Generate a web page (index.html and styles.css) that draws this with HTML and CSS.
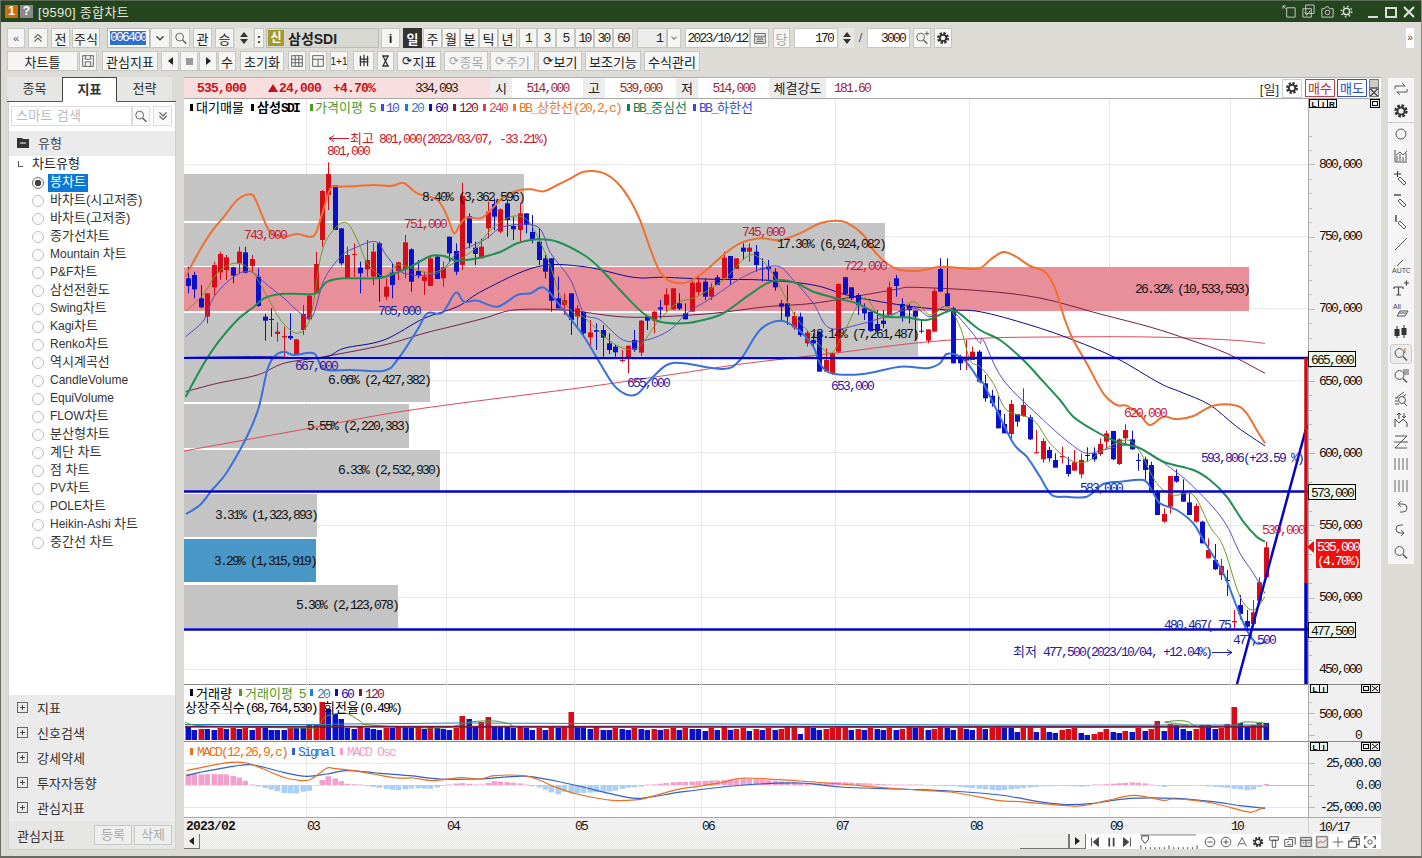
FILE: index.html
```html
<!DOCTYPE html>
<html lang="ko">
<head>
<meta charset="utf-8">
<title>[9590] 종합차트</title>
<link rel="stylesheet" href="styles.css">
</head>
<body>
<svg class="defs" width="0" height="0">
  <symbol id="gear" viewBox="0 0 18 18">
    <circle cx="9" cy="9" r="5.4" fill="none" stroke="#333" stroke-width="2.6" stroke-dasharray="2.6 1.6"/>
    <circle cx="9" cy="9" r="3.6" fill="none" stroke="#333" stroke-width="2"/>
  </symbol>
  <symbol id="mag" viewBox="0 0 18 18">
    <circle cx="7.5" cy="8" r="4.4" fill="none" stroke="#555"/><path d="M11 11.5l4 4" stroke="#555" stroke-width="1.4"/>
  </symbol>
  <symbol id="pencil" viewBox="0 0 18 18">
    <path d="M8 8l6 6-2 2-6-6z" fill="none" stroke="#555"/>
  </symbol>
  <symbol id="bars" viewBox="0 0 18 18">
    <path d="M3 3v12M7 3v12M11 3v12M15 3v12" stroke="#666" fill="none"/>
  </symbol>
  <symbol id="chev" viewBox="0 0 18 18">
    <path d="M5 7l4 4 4-4" stroke="#444" stroke-width="1.5" fill="none"/>
  </symbol>
  <symbol id="chev2" viewBox="0 0 18 18">
    <path d="M5 9l4-4 4 4M5 13l4-4 4 4" stroke="#555" stroke-width="1.2" fill="none"/>
  </symbol>
  <symbol id="chev3" viewBox="0 0 18 18">
    <path d="M5 5l4 4 4-4M5 9l4 4 4-4" stroke="#555" stroke-width="1.2" fill="none"/>
  </symbol>
</svg>

<div class="window">
  <div class="titlebar">
    <span class="tbadge orange">1</span><span class="tbadge grey">?</span>
    <span class="ttext">[9590] 종합차트</span>
    <span class="ticons">
      <svg class="ti" viewBox="0 0 16 16"><path d="M1 2l3 3M1 2h3M1 2v3M5 4h9v10H5z" fill="none" stroke="#ccc"/></svg>
      <svg class="ti" viewBox="0 0 16 16"><path d="M5 1h9v9H5zM2 5h9v9H2zM4 9l2 3 4-5" fill="none" stroke="#ccc"/></svg>
      <svg class="ti" viewBox="0 0 16 16"><path d="M2 5h3l1-2h3l1 2h4v9H2z" fill="none" stroke="#ccc"/><circle cx="8" cy="9" r="2.4" fill="none" stroke="#ccc"/></svg>
      <svg class="ti" viewBox="0 0 16 16"><circle cx="8" cy="8" r="3.4" fill="none" stroke="#ddd" stroke-width="1.5"/><circle cx="8" cy="8" r="5.6" fill="none" stroke="#ddd" stroke-width="1.6" stroke-dasharray="1.6 2.8"/></svg>
      <svg class="wb first" viewBox="0 0 14 14"><path d="M2 12h10" stroke="#ddd" stroke-width="2"/></svg>
      <svg class="wb" viewBox="0 0 14 14"><path d="M2 3h10v9H2z" fill="none" stroke="#ddd" stroke-width="2"/></svg>
      <svg class="wb" viewBox="0 0 14 14"><path d="M2 2l10 10M12 2L2 12" stroke="#ddd" stroke-width="2.2"/></svg>
    </span>
  </div>

  <div class="toolbars">
    <div class="tb">
      <span class="b w18 small">«</span>
      <span class="b w20 m3"><svg class="ic" viewBox="0 0 18 18"><use href="#chev2"/></svg></span>
      <span class="b w19 m3">전</span>
      <span class="b w28 m2">주식</span>
      <span class="inp w43 m7"><span class="sel">006400</span></span>
      <span class="b w20"><svg class="ic" viewBox="0 0 18 18"><use href="#chev"/></svg></span>
      <span class="b w19 m1"><svg class="ic" viewBox="0 0 18 18"><use href="#mag"/></svg></span>
      <span class="b w19 m3">관</span>
      <span class="b w19 m3">승</span>
      <span class="spin w18 m1"><i class="up"></i><i class="dn"></i></span>
      <span class="b w10 m1 bold">:</span>
      <span class="namebox w113 m2"><span class="sin">신</span><span class="nm">삼성SDI</span></span>
      <span class="b w19 m2 bold">i</span>
      <span class="b w19 m3 dark">일</span>
      <span class="b w19 m1">주</span>
      <span class="b w18">월</span>
      <span class="b w19">분</span>
      <span class="b w19">틱</span>
      <span class="b w19">년</span>
      <span class="b w18 m2 n">1</span>
      <span class="b w19 n">3</span>
      <span class="b w19 n">5</span>
      <span class="b w19 n">10</span>
      <span class="b w19 n">30</span>
      <span class="b w20 n">60</span>
      <span class="b w30 m4 grey-b right n">1</span>
      <span class="b w14"><svg class="ic" viewBox="0 0 18 18"><use href="#chev"/></svg></span>
      <span class="b w65 m4 white n">2023/10/12</span>
      <span class="b w19"><svg class="ic" viewBox="0 0 18 18"><path d="M3 4h12v11H3zM3 7h12M5 9h8M5 11h8M5 13h8" fill="none" stroke="#555"/></svg></span>
      <span class="b w17 m4 disabled">당</span>
      <span class="b w44 m4 white right n">170</span>
      <span class="spin w15 m1"><i class="up"></i><i class="dn"></i></span>
      <span class="slash">/</span>
      <span class="b w43 white right n">3000</span>
      <span class="b w18 m3"><svg class="ic" viewBox="0 0 18 18"><use href="#mag"/><path d="M12 4h5M14.500 1.500v5" stroke="#555"/></svg></span>
      <span class="b w18 m3"><svg class="ic" viewBox="0 0 18 18"><use href="#gear"/></svg></span>
      <span class="fold">»</span>
    </div>
    <div class="tb">
      <span class="b w71">차트틀</span>
      <span class="b w18 m1"><svg class="ic" viewBox="0 0 18 18"><path d="M3 3h12v12H3zM6 3v4h6V3M6 15v-5h6v5" fill="none" stroke="#555"/></svg></span>
      <span class="b w56 m5">관심지표</span>
      <span class="b w18 m3"><i class="tri-l"></i></span>
      <span class="b w18 m1"><i class="sq"></i></span>
      <span class="b w18 m1"><i class="tri-r"></i></span>
      <span class="b w18 m1">수</span>
      <span class="b w44 m4">초기화</span>
      <span class="b w18 m4"><svg class="ic" viewBox="0 0 18 18"><path d="M3 3h12v12H3zM3 7h12M3 11h12M7 3v12M11 3v12" fill="none" stroke="#555"/></svg></span>
      <span class="b w18 m3"><svg class="ic" viewBox="0 0 18 18"><path d="M3 3h12v12H3zM3 7h12M9 7v8" fill="none" stroke="#555"/></svg></span>
      <span class="b w18 m3 tiny">1+1</span>
      <span class="b w21 m5"><svg class="ic" viewBox="0 0 18 18"><path d="M5 3v12M9 2v13M13 3v12M4 7h10M4 10h10" fill="none" stroke="#333" stroke-width="1.4"/></svg></span>
      <span class="b w17 m3"><svg class="ic" viewBox="0 0 18 18"><path d="M5 3h8M5 15h8M6 3l6 12M12 3L6 15" fill="none" stroke="#333" stroke-width="1.6"/></svg></span>
      <span class="b w44 m3"><span class="rot">⟳</span>지표</span>
      <span class="b w44 m3 disabled"><span class="rot">⟳</span>종목</span>
      <span class="b w45 m2 disabled"><span class="rot">⟳</span>주기</span>
      <span class="b w44 m3"><span class="rot">⟳</span>보기</span>
      <span class="b w56 m3">보조기능</span>
      <span class="b w56 m3">수식관리</span>
    </div>
  </div>

  <div class="main">
    <aside class="side">
      <div class="tabs">
        <span class="tab">종목</span><span class="tab on">지표</span><span class="tab">전략</span>
      </div>
      <div class="panel">
        <div class="searchrow">
          <span class="search">스마트 검색</span>
          <span class="sbtn"><svg class="ic" viewBox="0 0 18 18"><use href="#mag"/></svg></span>
          <span class="sbtn second"><svg class="ic" viewBox="0 0 18 18"><use href="#chev3"/></svg></span>
        </div>
        <div class="head">
          <svg class="folder" viewBox="0 0 12 10"><path d="M0 0h5l1 1h6v9H0z" fill="#333"/><path d="M3 5h6" stroke="#fff"/></svg>
          <span class="headt">유형</span>
        </div>
        <div class="tree">
          <div class="root"><i class="corner"></i>차트유형</div>
          <div class="row"><i class="radio on"></i><span class="hl">봉차트</span></div>
          <div class="row"><i class="radio"></i><span>바차트(시고저종)</span></div>
          <div class="row"><i class="radio"></i><span>바차트(고저종)</span></div>
          <div class="row"><i class="radio"></i><span>종가선차트</span></div>
          <div class="row"><i class="radio"></i><span><em class="l">Mountain </em>차트</span></div>
          <div class="row"><i class="radio"></i><span><em class="l">P&amp;F</em>차트</span></div>
          <div class="row"><i class="radio"></i><span>삼선전환도</span></div>
          <div class="row"><i class="radio"></i><span><em class="l">Swing</em>차트</span></div>
          <div class="row"><i class="radio"></i><span><em class="l">Kagi</em>차트</span></div>
          <div class="row"><i class="radio"></i><span><em class="l">Renko</em>차트</span></div>
          <div class="row"><i class="radio"></i><span>역시계곡선</span></div>
          <div class="row"><i class="radio"></i><span><em class="l">CandleVolume</em></span></div>
          <div class="row"><i class="radio"></i><span><em class="l">EquiVolume</em></span></div>
          <div class="row"><i class="radio"></i><span><em class="l">FLOW</em>차트</span></div>
          <div class="row"><i class="radio"></i><span>분산형차트</span></div>
          <div class="row"><i class="radio"></i><span>계단 차트</span></div>
          <div class="row"><i class="radio"></i><span>점 차트</span></div>
          <div class="row"><i class="radio"></i><span><em class="l">PV</em>차트</span></div>
          <div class="row"><i class="radio"></i><span><em class="l">POLE</em>차트</span></div>
          <div class="row"><i class="radio"></i><span><em class="l">Heikin-Ashi </em>차트</span></div>
          <div class="row"><i class="radio"></i><span>중간선 차트</span></div>
        </div>
        <div class="accordion">
          <div class="acc"><i class="plus"></i>지표</div>
          <div class="acc"><i class="plus"></i>신호검색</div>
          <div class="acc"><i class="plus"></i>강세약세</div>
          <div class="acc"><i class="plus"></i>투자자동향</div>
          <div class="acc"><i class="plus"></i>관심지표</div>
        </div>
        <div class="sidefoot">
          <span class="ftitle">관심지표</span>
          <span class="fbtn">등록</span><span class="fbtn">삭제</span>
        </div>
      </div>
    </aside>

    <section class="chartcol">
      <div class="quote">
        <div class="q-pink">
          <span class="q1">535,000</span><span class="q2"><i class="uptri"></i>24,000</span><span class="q3">+4.70%</span><span class="q4">334,093</span>
        </div>
        <span class="ql w22">시</span><span class="qv">514,000</span>
        <span class="ql w22">고</span><span class="qv">539,000</span>
        <span class="ql w22">저</span><span class="qv">514,000</span>
        <span class="ql w57">체결강도</span><span class="qs">181.60</span>
        <span class="qday">[일]</span>
        <span class="qgear"><svg class="ic" viewBox="0 0 18 18"><use href="#gear"/></svg></span>
        <span class="qbuy">매수</span><span class="qsell">매도</span>
        <span class="qmini"><i></i><i class="x"></i></span>
      </div>

      <svg id="price" class="pane" width="1197" height="585" viewBox="184 99 1197 585">
        <rect x="184" y="99" width="1124" height="585" fill="#fff"/>
        <g id="grid"></g>
        <g class="profile">
          <rect x="184" y="174" width="340" height="47"/>
          <rect x="184" y="223" width="701" height="43"/>
          <rect x="184" y="267" width="1065" height="44" class="poc"/>
          <rect x="184" y="313" width="734" height="43"/>
          <rect x="184" y="360" width="246" height="42"/>
          <rect x="184" y="404" width="225" height="44"/>
          <rect x="184" y="450" width="256" height="42"/>
          <rect x="184" y="494" width="133" height="43"/>
          <rect x="184" y="539" width="132" height="43" class="cur"/>
          <rect x="184" y="585" width="214" height="43"/>
        </g>
        <g id="lines-back"></g>
        <g id="candles"></g>
        <g id="lines-front"></g>
        <g class="hlines">
          <path d="M184 358h1124M184 491.500h1124M184 629.500h1124"/>
          <path d="M1237 684L1307 425"/>
        </g>
        <path d="M1306 358v225" stroke="#d00a14" stroke-width="3.500"/>
        <path d="M1306 583v101" stroke="#0000c4" stroke-width="3.500"/>

        <g class="legend">
          <rect x="190" y="104" width="3" height="7" fill="#000"/><text x="196" y="112"><tspan class="h">대기매물</tspan></text>
          <rect x="251" y="104" width="3" height="7" fill="#000"/><text x="257" y="112" class="bd"><tspan class="h">삼성</tspan>SDI</text>
          <rect x="310" y="104" width="3" height="7" fill="#4f9a25"/><text x="315" y="112" fill="#4f9a25"><tspan class="h">가격이평</tspan> 5</text>
          <rect x="381" y="104" width="3" height="7" fill="#4848e0"/><text x="386" y="112" fill="#4848e0">10</text>
          <rect x="405" y="104" width="3" height="7" fill="#1c84c4"/><text x="411" y="112" fill="#1c84c4">20</text>
          <rect x="429" y="104" width="3" height="7" fill="#1010a8"/><text x="435" y="112" fill="#1010a8">60</text>
          <rect x="453" y="104" width="3" height="7" fill="#702040"/><text x="459" y="112" fill="#702040">120</text>
          <rect x="483" y="104" width="3" height="7" fill="#e04050"/><text x="489" y="112" fill="#e04050">240</text>
          <rect x="513" y="104" width="3" height="7" fill="#e87830"/><text x="519" y="112" fill="#e87830">BB_<tspan class="h">상한선</tspan>(20,2,c)</text>
          <rect x="627" y="104" width="3" height="7" fill="#108050"/><text x="633" y="112" fill="#108050">BB_<tspan class="h">중심선</tspan></text>
          <rect x="693" y="104" width="3" height="7" fill="#3050d0"/><text x="699" y="112" fill="#3050d0">BB_<tspan class="h">하한선</tspan></text>
        </g>

        <g class="plabel" text-anchor="end">
          <text x="524" y="201">8.40% (3,362,596)</text>
          <text x="885" y="248">17.30% (6,924,082)</text>
          <text x="1249" y="293">26.32% (10,533,593)</text>
          <text x="918" y="338">18.14% (7,261,487)</text>
          <text x="430" y="384">6.06% (2,427,382)</text>
          <text x="409" y="430">5.55% (2,220,383)</text>
          <text x="440" y="474">6.33% (2,532,930)</text>
          <text x="317" y="519">3.31% (1,323,893)</text>
          <text x="316" y="565">3.29% (1,315,919)</text>
          <text x="398" y="609">5.30% (2,123,078)</text>
        </g>
        <path d="M329 138.500h20M329 138.500l5-3M329 138.500l5 3" stroke="#c8182c" fill="none"/>
        <path d="M1212 652.500h20M1232 652.500l-5-3M1232 652.500l-5 3" stroke="#1c20a0" fill="none"/>
        <g class="redl">
          <text x="350" y="143"><tspan class="h">최고</tspan></text>
          <text x="379" y="143">801,000(2023/03/07, -33.21%)</text>
          <text x="327" y="155">801,000</text>
          <text x="244" y="239">743,000</text>
          <text x="404" y="228">751,000</text>
          <text x="742" y="236">745,000</text>
          <text x="844" y="270">722,000</text>
          <text x="1124" y="417">620,000</text>
          <text x="1262" y="534">539,000</text>
        </g>
        <g class="bluel">
          <text x="378" y="315">705,000</text>
          <text x="295" y="370">667,000</text>
          <text x="627" y="387">655,000</text>
          <text x="831" y="390">653,000</text>
          <text x="1080" y="492">583,000</text>
          <text x="1233" y="644">477,500</text>
          <text x="1201" y="462">593,806(+23.59 %)</text>
          <text x="1164" y="629">480,467( 75</text>
          <text x="1013" y="656"><tspan class="h">최저</tspan></text>
          <text x="1043" y="656">477,500(2023/10/04, +12.04%)</text>
        </g>

        <rect x="1308" y="99" width="73" height="585" fill="#f0f0f0"/>
        <path d="M1308.500 99v585" stroke="#aaa"/>
        <path id="pticks" stroke="#bbb" fill="none"/>
        <g class="lir">
          <rect x="1309.500" y="99.500" width="9" height="8"/><rect x="1318.500" y="99.500" width="9" height="8"/><rect x="1327.500" y="99.500" width="9" height="8"/>
          <text x="1314" y="106.500">L</text><text x="1323" y="106.500">I</text><text x="1332" y="106.500">R</text>
          <rect x="1370.500" y="99.500" width="9" height="8"/><rect x="1372.500" y="101.500" width="5" height="4"/>
        </g>
        <g class="axis" text-anchor="end">
          <text x="1361" y="168">800,000</text>
          <text x="1361" y="240">750,000</text>
          <text x="1361" y="312">700,000</text>
          <text x="1361" y="385">650,000</text>
          <text x="1361" y="457">600,000</text>
          <text x="1361" y="529">550,000</text>
          <text x="1361" y="601">500,000</text>
          <text x="1361" y="673">450,000</text>
        </g>
        <g class="badge">
          <rect x="1308.500" y="351.500" width="47" height="15"/><text x="1332" y="363.500">665,000</text>
          <rect x="1308.500" y="484.500" width="47" height="15"/><text x="1332" y="496.500">573,000</text>
          <rect x="1308.500" y="622.500" width="47" height="15"/><text x="1332" y="634.500">477,500</text>
        </g>
        <path d="M1307 547l7-6v12z" fill="#ee1010"/>
        <rect x="1316" y="539" width="44" height="29" fill="#ee1010"/>
        <g class="lastp"><text x="1338" y="551">535,000</text><text x="1338" y="565">(4.70%)</text></g>
      </svg>

      <svg id="volume" class="pane lined" width="1197" height="57" viewBox="184 685 1197 57">
        <rect x="184" y="685" width="1124" height="57" fill="#fff"/>
        <path d="M184 684.500h1197" stroke="#8a8a8a" transform="translate(0,1)"/>
        <g id="vgrid"></g>
        <g id="vbars"></g>
        <g id="vlines"></g>
        <g class="legend">
          <rect x="190" y="690" width="3" height="7" fill="#000"/><text x="196" y="699"><tspan class="h">거래량</tspan></text>
          <rect x="239" y="690" width="3" height="7" fill="#4f9a25"/><text x="245" y="699" fill="#4f9a25"><tspan class="h">거래이평</tspan> 5</text>
          <rect x="310" y="690" width="3" height="7" fill="#1c84c4"/><text x="317" y="699" fill="#1c84c4">20</text>
          <rect x="335" y="690" width="3" height="7" fill="#1010a8"/><text x="341" y="699" fill="#1010a8">60</text>
          <rect x="359" y="690" width="3" height="7" fill="#702040"/><text x="365" y="699" fill="#702040">120</text>
          <text x="185" y="713"><tspan class="h">상장주식수</tspan>(68,764,530)</text><text x="323" y="713"><tspan class="h">회전율</tspan>(0.49%)</text>
        </g>
        <rect x="1308" y="686" width="73" height="56" fill="#f0f0f0"/>
        <path d="M1308.500 685v57" stroke="#aaa"/>
        <path id="vticks" stroke="#bbb" fill="none"/>
        <g class="lir">
          <rect x="1310.500" y="685.500" width="9" height="8"/><rect x="1319.500" y="685.500" width="8" height="8"/>
          <text x="1315" y="692.500">L</text><text x="1323.500" y="692.500">I</text>
          <rect x="1361.500" y="685.500" width="9" height="8"/><rect x="1370.500" y="685.500" width="9" height="8"/>
          <rect x="1363.500" y="687.500" width="5" height="4"/><path d="M1372 687l6 5M1378 687l-6 5" fill="none" stroke="#000"/>
        </g>
        <g class="axis" text-anchor="end">
          <text x="1361" y="719">500,000</text>
          <text x="1361" y="740">0</text>
        </g>
      </svg>

      <svg id="macd" class="pane lined" width="1197" height="76" viewBox="184 742 1197 76">
        <rect x="184" y="742" width="1124" height="76" fill="#fff"/>
        <path d="M184 742.500h1197" stroke="#8a8a8a"/>
        <g id="mgrid"></g>
        <g id="mbars"></g>
        <g id="mlines"></g>
        <g class="legend">
          <rect x="190" y="749" width="3" height="7" fill="#e87020"/><text x="197" y="757" fill="#e87020">MACD(12,26,9,c)</text>
          <rect x="292" y="749" width="3" height="7" fill="#3060c8"/><text x="298" y="757" fill="#3060c8">Signal</text>
          <rect x="340" y="749" width="3" height="7" fill="#f4a0cc"/><text x="347" y="757" fill="#f4a0cc">MACD Osc</text>
        </g>
        <rect x="1308" y="743" width="73" height="75" fill="#f0f0f0"/>
        <path d="M1308.500 743v75" stroke="#aaa"/>
        <path id="mticks" stroke="#bbb" fill="none"/>
        <g class="lir">
          <rect x="1310.500" y="743.500" width="9" height="8"/><rect x="1319.500" y="743.500" width="8" height="8"/>
          <text x="1315" y="750.500">L</text><text x="1323.500" y="750.500">I</text>
          <rect x="1361.500" y="743.500" width="9" height="8"/><rect x="1370.500" y="743.500" width="9" height="8"/>
          <rect x="1363.500" y="745.500" width="5" height="4"/><path d="M1372 745l6 5M1378 745l-6 5" fill="none" stroke="#000"/>
        </g>
        <g class="axis" text-anchor="end">
          <text x="1380" y="768">25,000.00</text>
          <text x="1380" y="790">0.00</text>
          <text x="1380" y="812">-25,000.00</text>
        </g>
      </svg>

      <svg id="xaxis" class="pane lined" width="1197" height="17" viewBox="184 818 1197 17">
        <rect x="184" y="818" width="1197" height="17" fill="#f0f0f0"/>
        <path d="M184 818.500h1197" stroke="#aaa"/>
        <path d="M1308.500 819v16" stroke="#ccc"/>
        <g class="xl">
          <text x="186" y="831" class="xbold">2023/02</text>
          <text x="307" y="831">03</text>
          <text x="447" y="831">04</text>
          <text x="575" y="831">05</text>
          <text x="702" y="831">06</text>
          <text x="836" y="831">07</text>
          <text x="970" y="831">08</text>
          <text x="1110" y="831">09</text>
          <text x="1231" y="831">10</text>
          <text x="1319" y="832">10/17</text>
        </g>
      </svg>

      <div class="scroll">
        <span class="arrow"><i class="tri-l"></i></span>
        <span class="track"></span>
        <span class="thumb"></span>
        <span class="arrow wide"><i class="tri-r"></i></span>
        <div class="ctrls">
          <svg class="c" viewBox="0 0 16 16"><path d="M4 3v10M12 3L6 8l6 5z" fill="#444" stroke="#444"/></svg>
          <svg class="c" viewBox="0 0 16 16"><path d="M5 3h2v10H5zM10 3h2v10h-2z" fill="#444"/></svg>
          <svg class="c" viewBox="0 0 16 16"><path d="M12 3v10M4 3l6 5-6 5z" fill="#444" stroke="#444"/></svg>
          <svg class="slider" viewBox="0 0 62 16"><path d="M0 1h60" stroke="#777"/><path d="M2 2h7v4l-3.500 4-3.500-4z" fill="#fff" stroke="#333"/><path d="M1 16v-4M6 16v-2M11 16v-2M16 16v-2M21 16v-2M26 16v-2M31 16v-4M36 16v-2M41 16v-2M46 16v-2M51 16v-2M56 16v-2M61 16v-4" stroke="#444"/></svg>
          <svg class="c" viewBox="0 0 16 16"><circle cx="8" cy="8" r="5.500" fill="none" stroke="#444"/><path d="M5 8h6" stroke="#444"/></svg>
          <svg class="c" viewBox="0 0 16 16"><circle cx="8" cy="8" r="5.500" fill="none" stroke="#444"/><path d="M5 8h6M8 5v6" stroke="#444"/></svg>
          <svg class="c" viewBox="0 0 16 16"><path d="M3 13l5-10 5 10M5 10h6" fill="none" stroke="#555"/></svg>
          <svg class="c" viewBox="0 0 18 18"><use href="#gear"/></svg>
          <svg class="c" viewBox="0 0 16 16"><path d="M3 2h10v4H3zM6 6h4v8H6z" fill="none" stroke="#444"/></svg>
          <svg class="c" viewBox="0 0 16 16"><path d="M2 5h9v8H2zM6 3h8v8M4 9l3-2M5 11h4" fill="none" stroke="#444"/></svg>
          <svg class="c box" viewBox="0 0 16 16"><path d="M2 3h12v10H2zM2 6h12M8 6v7M4 9h2M10 9h2" fill="none" stroke="#444"/></svg>
          <svg class="c box" viewBox="0 0 16 16"><path d="M2 2h12v12H2z" fill="none" stroke="#555"/><path d="M3 10l3-3 3 2 4-4" fill="none" stroke="#c33"/></svg>
          <svg class="c" viewBox="0 0 16 16"><path d="M8 2v12M2 8h12" stroke="#555"/></svg>
          <svg class="c" viewBox="0 0 16 16"><path d="M2 7h9v7H2zM5 7V4h9v7h-3M7 4V2h7" fill="none" stroke="#444" stroke-width="1.200"/></svg>
          <svg class="c" viewBox="0 0 16 16"><path d="M2 5V2h3M11 2h3v3M14 11v3h-3M5 14H2v-3" fill="none" stroke="#444" stroke-width="1.400"/><circle cx="8" cy="8" r="2.500" fill="none" stroke="#444"/></svg>
        </div>
      </div>
    </section>

    <nav class="rtool">
      <svg class="r" viewBox="0 0 18 18"><path d="M3 9V6h10l-3-3M15 9v3H5l3 3" fill="none" stroke="#555"/></svg>
      <svg class="r" viewBox="0 0 18 18"><use href="#gear"/></svg>
      <i class="rsep"></i>
      <svg class="r" viewBox="0 0 18 18"><circle cx="9" cy="9" r="5" fill="none" stroke="#555"/></svg>
      <svg class="r" viewBox="0 0 18 18"><path d="M3 3v12h12M5 14V9M8 14V7M11 14v-4M14 14V6M4 8l4-3 3 3 4-4" fill="none" stroke="#555"/></svg>
      <svg class="r" viewBox="0 0 18 18"><path d="M2 5h7M5.500 2v6" stroke="#333"/><use href="#pencil"/></svg>
      <svg class="r" viewBox="0 0 18 18"><path d="M2 4h7" stroke="#333" stroke-width="1.300"/><use href="#pencil"/></svg>
      <svg class="r" viewBox="0 0 18 18"><path d="M4 2v7" stroke="#333" stroke-width="1.300"/><use href="#pencil"/></svg>
      <svg class="r" viewBox="0 0 18 18"><path d="M3 15L15 3" stroke="#555"/></svg>
      <svg class="r" viewBox="0 0 18 18"><path d="M5 9l6-6" stroke="#555"/><text x="0" y="16" class="auto">AUTO</text></svg>
      <svg class="r" viewBox="0 0 18 18"><path d="M2 8h9M6.500 8v8M4 16h5M12 4h5M14.500 1.500v5M2 8v2M11 8v2" fill="none" stroke="#444" stroke-width="1.200"/></svg>
      <svg class="r" viewBox="0 0 18 18"><text x="1" y="8" class="auto">All</text><path d="M5 15l3-5h8l-3 5zM7 12h7" fill="none" stroke="#555"/></svg>
      <svg class="r" viewBox="0 0 18 18"><path d="M5 3v12M12 2v13" stroke="#333"/><path d="M2.500 6h5v7h-5zM9.500 5h5v7h-5z" fill="#333"/></svg>
      <span class="rsel"><svg class="r" viewBox="0 0 18 18"><use href="#mag"/><text x="12" y="8" class="auto2">i</text></svg></span>
      <svg class="r" viewBox="0 0 18 18"><use href="#mag"/><path d="M11 3h6M11 5h6M12 7h5" stroke="#555"/></svg>
      <svg class="r" viewBox="0 0 18 18"><path d="M3 15h4M3 12h3M3 9h3M12 3L4 9" fill="none" stroke="#555"/><circle cx="10" cy="11" r="3.500" fill="none" stroke="#555"/><path d="M12 14l3 3M14 5l-3 3" stroke="#555"/></svg>
      <svg class="r" viewBox="0 0 18 18"><path d="M3 16V8l4 4 4-4 4 4v4M7 2v6M5 4l2-2 2 2M12 2v5M10 5l2 2 2-2" fill="none" stroke="#444"/></svg>
      <svg class="r" viewBox="0 0 18 18"><path d="M3 3h12L3 15h12M2 9h14" fill="none" stroke="#555"/></svg>
      <svg class="r" viewBox="0 0 18 18"><use href="#bars"/></svg>
      <svg class="r" viewBox="0 0 18 18"><use href="#bars"/></svg>
      <svg class="r" viewBox="0 0 18 18"><path d="M6 5h5a4 4 0 0 1 0 8H8M6 5l3-3M6 5l3 3" fill="none" stroke="#555"/></svg>
      <svg class="r" viewBox="0 0 18 18"><path d="M12 12H8a4 4 0 0 1 0-8h3M12 12l-3-3M12 12l-3 3" fill="none" stroke="#555"/></svg>
      <svg class="r" viewBox="0 0 18 18"><use href="#mag"/></svg>
    </nav>
  </div>
</div>
<script src="chart.js"></script>
</body>
</html>
```

FILE: styles.css
```css
* { box-sizing: border-box; }
html, body { margin: 0; padding: 0; }
body {
  width: 1422px; height: 858px; overflow: hidden;
  font-family: "Liberation Sans", "Noto Sans CJK KR", sans-serif;
  font-size: 13px; color: #222; background: #dcdbd6;
}
.defs { position: absolute; }
.window { width: 1422px; height: 858px; display: flex; flex-direction: column; border-bottom: 2px solid #6a6a66; border-left: 1px solid #6a6a66; border-right: 1px solid #8a8a86; }

.titlebar { height: 22px; background: #24451d; border-top: 1px solid #5a6a55; display: flex; align-items: center; padding-left: 4px; flex: none; }
.tbadge { width: 13px; height: 13px; margin-right: 2px; color: #fff; font: bold 12px/13px "Liberation Sans", sans-serif; text-align: center; }
.orange { background: #c87010; }
.grey { background: #8a8a8a; }
.ttext { color: #e4e8e0; margin-left: 3px; font-size: 13px; letter-spacing: .3px; }
.ticons { margin-left: auto; display: flex; align-items: center; padding-right: 5px; }
.ti { width: 15px; height: 15px; margin-right: 4px; }
.wb { width: 14px; height: 14px; margin-left: 4px; }
.wb.first { margin-left: 8px; }

.toolbars { height: 55px; padding-top: 6px; flex: none; }
.tb { display: flex; height: 20px; margin-bottom: 3px; padding-left: 6px; align-items: stretch; }
.b { display: flex; align-items: center; justify-content: center; background: #f5f5f3; border: 1px solid #c6c6c2; color: #222; white-space: nowrap; overflow: hidden; flex: none; }
.n { font-family: "Liberation Mono", monospace; font-size: 13px; letter-spacing: -1.8px; }
.small { font-size: 11px; color: #555; }
.tiny { font-size: 10px; }
.bold { font-weight: 700; }
.dark { background: #333; color: #fff; font-weight: 700; border-color: #333; }
.white { background: #fff; }
.right { justify-content: flex-end; padding-right: 4px; }
.grey-b { background: #ececea; }
.disabled { color: #a8a8a8; }
.rot { font-size: 12px; margin-right: 1px; }
.ic { width: 16px; height: 16px; display: block; }
.w10 { width: 10px; } .w14 { width: 14px; } .w15 { width: 15px; } .w17 { width: 17px; } .w18 { width: 18px; }
.w19 { width: 19px; } .w20 { width: 20px; } .w21 { width: 21px; } .w28 { width: 28px; } .w30 { width: 30px; }
.w43 { width: 43px; } .w44 { width: 44px; } .w45 { width: 45px; } .w56 { width: 56px; } .w65 { width: 65px; }
.w71 { width: 71px; } .w113 { width: 113px; }
.m1 { margin-left: 1px; } .m2 { margin-left: 2px; } .m3 { margin-left: 3px; } .m4 { margin-left: 4px; } .m5 { margin-left: 5px; } .m7 { margin-left: 7px; }
.inp { background: #fff; border: 1px solid #b8b8b4; padding: 2px 0 2px 2px; overflow: hidden; flex: none; line-height: 14px; }
.sel { display: block; width: 36px; background: #2c6fd0; color: #fff; overflow: hidden; height: 14px; white-space: nowrap; font-family: "Liberation Mono", monospace; font-size: 13px; letter-spacing: -1.8px; }
.spin { display: flex; flex-direction: column; align-items: center; justify-content: space-around; padding: 3px 0; background: #e6e6e2; flex: none; }
.spin .up { border: 4px solid transparent; border-top: 0; border-bottom: 5px solid #333; }
.spin .dn { border: 4px solid transparent; border-bottom: 0; border-top: 5px solid #333; }
.namebox { background: #d8d8d3; border: 1px solid #bdbdb8; display: flex; align-items: center; flex: none; padding-left: 1px; }
.sin { background: #a39a2e; color: #fff; font-weight: 700; width: 16px; height: 16px; line-height: 16px; text-align: center; font-size: 12px; }
.nm { font-weight: 700; font-size: 14px; margin-left: 4px; font-family: "Liberation Sans", "Noto Sans CJK KR", sans-serif; }
.slash { width: 13px; text-align: center; color: #555; line-height: 20px; flex: none; }
.fold { margin-left: auto; margin-right: 7px; width: 8px; background: #fff; font-size: 10px; line-height: 20px; text-align: center; color: #444; }
.tri-l { border: 4px solid transparent; border-left: 0; border-right: 5px solid #222; }
.tri-r { border: 4px solid transparent; border-right: 0; border-left: 5px solid #222; }
.sq { width: 7px; height: 7px; background: #999; }

.main { flex: 1; display: flex; align-items: flex-start; padding-left: 6px; min-height: 0; }

.side { width: 169px; flex: none; display: flex; flex-direction: column; height: 773px; }
.tabs { display: flex; height: 25px; border-bottom: 1px solid #555; flex: none; }
.tab { width: 55px; background: #e6e6e4; text-align: center; line-height: 24px; color: #333; }
.tab.on { background: #fff; border: 1px solid #444; border-bottom: 1px solid #fff; height: 25px; font-weight: 700; }
.panel { flex: 1; background: #fff; border: 1px solid #d0d0cc; border-top: 0; margin-left: 1px; display: flex; flex-direction: column; min-height: 0; }
.searchrow { height: 29px; flex: none; display: flex; align-items: center; padding: 0 3px 1px 2px; }
.search { width: 121px; height: 20px; border: 1px solid #ddd; color: #bbb; padding-left: 4px; line-height: 18px; letter-spacing: .3px; }
.sbtn { width: 18px; height: 20px; border: 1px solid #ddd; display: flex; align-items: center; justify-content: center; font-size: 11px; color: #555; background: #fafafa; }
.sbtn.second { margin-left: 3px; width: 19px; }
.head { height: 25px; flex: none; background: #ebebeb; display: flex; align-items: center; padding-left: 8px; color: #444; }
.headt { margin-bottom: 3px; }
.folder { width: 12px; height: 10px; margin-right: 9px; margin-bottom: 2px; }
.tree { flex: 1; min-height: 0; }
.root { height: 18px; line-height: 15px; padding-left: 23px; position: relative; }
.corner { position: absolute; left: 9px; top: 5px; width: 5px; height: 6px; border-left: 1px solid #555; border-bottom: 1px solid #555; }
.row { height: 18px; display: flex; align-items: center; padding-left: 23px; color: #333; }
.row span { padding: 0 2px; line-height: 16px; margin-left: -1px; margin-bottom: 2px; }
.l { font-style: normal; font-size: 12px; }
.row .hl { background: #0a78d4; color: #fff; height: 18px; margin-bottom: 0; line-height: 15px; }
.radio { width: 12px; height: 12px; border-radius: 50%; border: 1px solid #c0c0c0; background: #fbfbfb; margin-right: 5px; flex: none; }
.radio.on { border: 1px solid #777; background: radial-gradient(circle, #444 0 3px, #f4f4f4 3.500px); }
.accordion { height: 126px; background: #ebebeb; flex: none; }
.acc { height: 25px; display: flex; align-items: center; padding-left: 8px; color: #333; }
.plus { width: 11px; height: 11px; border: 1px solid #666; margin-right: 9px; background: linear-gradient(#444, #444) center / 5px 1px no-repeat, linear-gradient(#444, #444) center / 1px 5px no-repeat; }
.sidefoot { height: 28px; flex: none; background: #e6e6e4; display: flex; align-items: center; padding-left: 8px; }
.ftitle { width: 77px; color: #333; }
.fbtn { width: 38px; height: 20px; border: 1px solid #c8c8c4; background: #eee; color: #aaa; text-align: center; line-height: 18px; margin-right: 2px; }

.chartcol { width: 1197px; margin-left: 8px; flex: none; }
.quote { height: 22px; background: #fff; border-top: 1px solid #b0b0ac; border-bottom: 1px solid #a8a8a4; display: flex; align-items: center; font-family: "Liberation Mono", "Noto Sans CJK KR", monospace; font-size: 13px; letter-spacing: -1.8px; }
.q-pink { width: 306px; height: 20px; background: #f8dede; display: flex; align-items: center; flex: none; }
.q1 { margin-left: 13px; width: 71px; color: #c8101c; font-weight: 700; letter-spacing: -.8px; }
.q2 { width: 65px; color: #c8101c; font-weight: 700; display: flex; align-items: center; letter-spacing: -.8px; }
.uptri { border: 5px solid transparent; border-top: 0; border-bottom: 8px solid #c8101c; margin-right: 1px; }
.q3 { width: 82px; color: #c8101c; font-weight: 700; letter-spacing: -.8px; }
.q4 { color: #222; }
.ql { background: #ececec; height: 20px; line-height: 20px; text-align: center; flex: none; color: #222; letter-spacing: 0; font-family: "Noto Sans CJK KR", sans-serif; font-size: 13px; }
.w22 { width: 22px; } .w57 { width: 57px; }
.qv { width: 71px; text-align: center; color: #a81c30; flex: none; }
.qs { width: 52px; text-align: center; color: #a81c30; flex: none; }
.qday { margin-left: auto; color: #333; letter-spacing: 0; font-family: "Liberation Sans", "Noto Sans CJK KR", sans-serif; font-size: 13px; }
.qgear { width: 20px; height: 19px; border: 1px solid #ccc; margin-left: 3px; display: flex; align-items: center; justify-content: center; }
.qbuy, .qsell { width: 30px; height: 18px; line-height: 16px; text-align: center; margin-left: 3px; letter-spacing: 0; font-family: "Noto Sans CJK KR", sans-serif; font-size: 13px; }
.qbuy { border: 1px solid #c04048; color: #c02838; }
.qsell { border: 1px solid #3850b8; color: #2848b8; margin-left: 2px; }
.qmini { width: 10px; display: flex; flex-direction: column; margin: 0 2px 0 2px; }
.qmini i { height: 9px; border: 1px solid #777; background: #ccc; }
.qmini i.x { background: linear-gradient(45deg, transparent 45%, #555 45% 55%, transparent 55%), linear-gradient(-45deg, #ddd 45%, #555 45% 55%, #ddd 55%); }

.pane { display: block; }
.pane text { font-family: "Liberation Mono", "Noto Sans CJK KR", monospace; font-size: 13px; letter-spacing: -1.8px; }
.pane .h { font-family: "Noto Sans CJK KR", sans-serif; font-size: 13px; letter-spacing: 0; }
.profile rect { fill: #c4c4c4; }
.profile .poc { fill: #e88f9a; }
.profile .cur { fill: #4a98c8; }
.hlines path { stroke: #0404c8; stroke-width: 2.500; fill: none; }
.pane .bd { font-weight: 700; }
.plabel text { fill: #111; }
.redl text { fill: #c8182c; }
.bluel text { fill: #1c20a0; }
.axis text { fill: #111; }
.lir rect { fill: #f0f0f0; stroke: #000; }
.pane .lir text { font-family: "Liberation Sans", sans-serif; font-size: 8px; font-weight: 700; text-anchor: middle; letter-spacing: 0; fill: #000; }
.badge rect { fill: #ecfaec; stroke: #000; }
.badge text { fill: #111; text-anchor: middle; }
.lastp text { fill: #fff; text-anchor: middle; }
.xl text { fill: #111; }
.pane .xbold { font-weight: 700; letter-spacing: -.8px; }

.scroll { height: 15px; display: flex; align-items: stretch; }
.arrow { width: 16px; background: #efefed; border-right: 1px solid #777; border-bottom: 1px solid #777; display: flex; align-items: center; justify-content: center; flex: none; }
.arrow.wide { width: 17px; border-left: 1px solid #777; }
.track { width: 820px; flex: none; background: repeating-conic-gradient(#e6e6e4 0 25%, #f4f4f2 0 50%) 0 0 / 2px 2px; }
.thumb { width: 49px; flex: none; background: #eeeeec; border-right: 1px solid #777; border-bottom: 1px solid #777; }
.ctrls { flex: 1; background: #fff; display: flex; align-items: center; padding-left: 2px; }
.c { width: 14px; height: 14px; margin-right: 2px; flex: none; }
.c.box { background: #e8e8e8; }
.slider { width: 62px; height: 15px; margin: 0 3px 0 2px; flex: none; }

.rtool { width: 26px; margin-left: 7px; margin-top: 1px; background: #f5f5f5; display: flex; flex-direction: column; align-items: center; flex: none; height: 486px; }
.r { width: 18px; height: 18px; margin: 2px 0; flex: none; display: block; }
.rsep { width: 26px; height: 1px; background: #ccc; flex: none; }
.rsel { display: block; border: 1px solid #ccc; border-radius: 3px; background: #ececec; height: 20px; width: 22px; padding-left: 1px; margin: 1px 0; flex: none; }
.rsel .r { margin: 0; }
.auto { font-family: "Liberation Sans", sans-serif; font-size: 7px; fill: #444; }
.auto2 { font-family: "Liberation Sans", sans-serif; font-size: 8px; fill: #444; }
```

FILE: chart.js
```js
(function () {
  var NS = 'http://www.w3.org/2000/svg';
  var RED = '#d80c18', BLUE = '#0a10c8';
  function el(parent, tag, attrs) {
    var e = document.createElementNS(NS, tag);
    for (var k in attrs) e.setAttribute(k, attrs[k]);
    document.getElementById(parent).appendChild(e);
    return e;
  }
  var X0 = 188, DX = 6.377;
  function xi(i) { return X0 + DX * i; }

  // candles: colour, wick top, body top, body bottom, wick bottom (measured per section)
  var A = 'b410,445,468,490 b425,435,478,505 b465,505,532,535 r490,490,560,580 r395,405,472,495 r365,372,427,450 r375,382,420,450 b410,412,437,460 r350,365,400,430 b350,367,428,430 r375,387,408,425 b415,440,528,530 b552,560,572,632 b535,567,570,620 r577,605,612,635 r590,618,622,680 b550,618,625,630 r628,628,672,672 r525,552,600,615 r495,497,568,570 r365,402,490,490 r180,183,330,350 r97,132,195,240 b165,165,300,300 b295,295,400,405 r350,375,445,445 r340,372,375,440 b395,413,430,490 r330,390,418,440 r340,365,440,465 b335,340,445,515 r445,470,500,510 b400,428,465,505 r395,397,423,450 r315,337,418,445 b355,358,455,485 b390,423,438,445 r425,440,453,495 r380,385,468,468 b375,380,447,445 r395,412,445,470 b320,320,370,395 b340,363,425,435 r158,198,405,420 b250,258,340,355 b335,353,372,405 r325,350,385,385 r215,245,295,325 b205,222,260,300 r235,238,305,310 b210,220,270,320 b260,288,298,330 r220,250,300,335 b250,250,285,310 b255,306,327,340 b295,335,390,405 b375,385,425,445 b385,385,512,545 b440,505,535,535 r490,510,525,555 b490,490,570,615 r525,535,560,590';
  var B = 'b335,335,400,410 r360,397,412,445 b370,390,395,450 b375,390,413,470 b400,430,450,462 b435,440,457,470 r450,480,482,487 r437,437,472,520 b390,420,450,455 r360,362,458,468 b350,350,362,390 r333,335,362,400 b300,322,328,355 r265,283,315,335 r265,265,328,330 b280,310,326,330 b310,340,358,358 r240,248,335,335 r225,247,276,285 b235,245,290,300 r250,262,290,300 b225,232,255,255 r155,173,235,240 b168,168,235,255 r175,175,207,207 b130,143,155,180 r130,143,155,185 b135,155,195,215 b175,205,208,245 b180,200,208,240 b205,215,262,272 b300,310,320,360 b255,310,350,375 r335,348,382,390 b338,350,405,410 r390,398,430,440 b400,420,430,445 b395,395,515,515 r445,480,515,515 r460,460,520,525 r250,252,455,458 b230,232,282,285 b262,262,295,300 b280,285,315,345 b310,325,340,360 b335,335,392,395 b330,372,392,395 b330,362,372,385 r245,262,345,345 b225,235,258,290 b295,312,350,365 b312,318,330,370 b330,332,350,420 b360,392,395,400 r388,388,422,430 r265,273,395,395 b175,207,275,275 b175,280,318,320 b320,325,490,490 b465,470,490,510 r420,470,482,510 r440,455,480,480';
  var C = 'b30,35,125,125 b105,130,175,185 b150,167,190,200 b170,210,265,265 b222,252,280,280 r180,192,282,295 b222,222,245,260 r145,195,228,230 b225,232,298,300 r270,337,340,340 r295,303,358,368 b320,330,355,365 b340,360,383,383 r320,348,352,370 b350,375,402,410 r330,367,392,392 r340,360,403,415 b322,345,347,365 b322,340,358,365 r295,312,342,348 r272,280,305,325 b272,273,358,360 r295,298,372,375 r253,270,295,310 b272,298,328,330 b340,360,362,392 b350,358,390,420 b365,375,458,458 b450,457,525,525 r505,522,545,548 r408,408,500,520 b388,408,425,428 b418,457,485,485 b460,487,525,525 r490,498,545,548 b542,545,610,610 r595,630,655,655 b612,660,688,690 r657,678,705,720 b690,720,722,768 r810,843,847,865 b765,795,822,838 b810,843,860,865 r780,817,852,855 r712,727,782,785 r605,622,712,715';
  var rows = [];
  [[A, 130], [B, 200], [C, 340]].forEach(function (seg) {
    seg[0].split(' ').forEach(function (s) {
      var n = s.slice(1).split(',').map(function (v) { return seg[1] + (+v) / 3; });
      rows.push({ c: s[0], w1: n[0], t: n[1], b: n[2], w2: n[3] });
    });
  });
  rows.forEach(function (r, i) {
    var x = Math.round(xi(i)), col = r.c === 'r' ? RED : BLUE;
    el('candles', 'rect', { x: x, y: r.w1, width: 1, height: Math.max(r.w2 - r.w1, 1), fill: col });
    el('candles', 'rect', { x: x - 2, y: r.t, width: 5, height: Math.max(r.b - r.t, 1), fill: col });
  });

  // smooth curve through points
  function curve(p) {
    var d = 'M' + p[0][0] + ' ' + p[0][1];
    for (var i = 0; i < p.length - 1; i++) {
      var a = p[i - 1] || p[i], b = p[i], c = p[i + 1], e = p[i + 2] || c;
      d += 'C' + (b[0] + (c[0] - a[0]) / 6).toFixed(1) + ' ' + (b[1] + (c[1] - a[1]) / 6).toFixed(1) + ' ' +
        (c[0] - (e[0] - b[0]) / 6).toFixed(1) + ' ' + (c[1] - (e[1] - b[1]) / 6).toFixed(1) + ' ' + c[0].toFixed(1) + ' ' + c[1].toFixed(1);
    }
    return d;
  }
  function map(ar, ox, oy, sx, sy) {
    var o = [];
    for (var i = 0; i < ar.length; i += 2) o.push([ox + ar[i] / sx, oy + ar[i + 1] / sy]);
    return o;
  }
  function join() {
    var out = [];
    for (var i = 0; i < arguments.length; i++) {
      arguments[i].forEach(function (q) { if (!out.length || q[0] > out[out.length - 1][0]) out.push(q); });
    }
    return out;
  }
  function z8(a) { return map(a, 184, 130, 3, 3); }
  function z9(a) { return map(a, 580, 200, 3, 3); }
  function z10(a) { return map(a, 960, 340, 3, 3); }
  function real(a) { return map(a, 0, 0, 1, 1); }
  function draw(parent, pts, col, w) {
    el(parent, 'path', { d: curve(pts), fill: 'none', stroke: col, 'stroke-width': w, 'stroke-linejoin': 'round' });
  }

  draw('lines-back', join(real([184, 451, 300, 430, 411, 410]), z8([680, 840, 1200, 772]), z9([300, 520, 500, 490, 760, 460, 1000, 430, 1200, 415]), real([1050, 337, 1150, 337]), z10([810, 0, 915, 10])), '#e04858', 1);
  draw('lines-back', join(z8([5, 785, 100, 760, 220, 735, 300, 700, 420, 680, 600, 645, 720, 610, 800, 590, 900, 565, 990, 540, 1140, 540]), z9([120, 350, 240, 350, 400, 340, 560, 320, 700, 310, 850, 285, 950, 268, 1000, 262, 1200, 272]), real([1040, 298, 1100, 314, 1150, 327]), z10([690, 0, 800, 40, 915, 100])), '#742044', 1);
  draw('lines-back', join(z8([5, 682, 250, 680, 410, 685, 480, 655, 600, 630, 720, 565, 820, 530, 900, 480, 1060, 410, 1200, 410]), z9([160, 232, 250, 232, 400, 238, 550, 240, 700, 255, 800, 285, 900, 305, 1000, 320, 1100, 330, 1200, 335]), real([1030, 325]), z10([340, 0, 470, 55, 600, 130, 660, 155, 750, 195, 830, 260, 915, 318])), '#0c0c90', 1);

  draw('lines-front', join(z8([5, 620, 60, 570, 90, 500, 150, 440, 200, 425, 250, 465, 300, 505, 350, 550, 385, 560, 420, 450, 470, 380, 510, 355, 575, 335, 610, 380, 660, 430, 760, 430, 820, 370, 900, 330, 960, 290, 1060, 290, 1100, 370, 1160, 450, 1200, 550]), z9([60, 360, 130, 420, 200, 420, 270, 390, 320, 340, 400, 290, 500, 225, 590, 198, 640, 240, 700, 310, 750, 385, 850, 370, 900, 355, 1000, 325, 1050, 350, 1100, 320, 1170, 390, 1200, 430]), z10([70, 0, 130, 120, 250, 240, 330, 310, 380, 340, 430, 330, 510, 315, 570, 340, 640, 390, 700, 440, 790, 540, 840, 640, 880, 700, 915, 760])), '#5a4ac8', 1);
  draw('lines-front', join(z8([5, 545, 60, 490, 100, 430, 150, 400, 200, 420, 250, 500, 290, 570, 340, 610, 380, 560, 410, 380, 440, 310, 485, 277, 520, 330, 550, 400, 600, 440, 640, 405, 700, 420, 740, 430, 790, 410, 840, 380, 880, 350, 920, 300, 980, 260, 1030, 270, 1070, 340, 1100, 410, 1130, 500, 1180, 560]), z9([10, 350, 100, 430, 170, 445, 230, 370, 290, 310, 350, 290, 430, 240, 500, 170, 540, 175, 590, 240, 640, 340, 690, 400, 750, 460, 790, 400, 850, 295, 900, 350, 940, 345, 1000, 305, 1050, 345, 1100, 320, 1140, 380, 1170, 480]), z10([20, 0, 60, 80, 100, 130, 140, 210, 220, 240, 270, 310, 330, 360, 380, 365, 430, 330, 500, 300, 540, 335, 590, 430, 640, 465, 700, 465, 750, 560, 790, 620, 840, 770, 880, 810, 915, 770])), '#6f9a22', 1);
  draw('lines-front', join(z8([5, 800, 60, 700, 100, 640, 160, 570, 210, 530, 240, 505, 290, 492, 350, 492, 395, 490, 430, 455, 480, 445, 580, 445, 620, 435, 680, 410, 740, 378, 780, 378, 820, 392, 880, 385, 950, 365, 1000, 340, 1060, 328, 1120, 335, 1200, 375]), z9([60, 205, 120, 270, 190, 340, 240, 365, 310, 370, 370, 360, 430, 340, 500, 290, 560, 250, 600, 240, 650, 250, 700, 275, 770, 295, 830, 310, 880, 335, 920, 350, 980, 352, 1040, 360, 1100, 335, 1130, 335, 1200, 390]), z10([120, 0, 190, 60, 250, 125, 300, 180, 340, 230, 400, 270, 470, 305, 540, 325, 610, 365, 700, 390, 750, 420, 800, 470, 850, 545, 890, 590, 915, 605])), '#1f8f50', 2);
  draw('lines-front', join(z8([5, 440, 20, 410, 60, 340, 90, 295, 120, 260, 160, 210, 200, 193, 215, 210, 240, 270, 262, 310, 300, 320, 340, 312, 375, 320, 395, 310, 415, 250, 440, 175, 470, 170, 520, 168, 570, 165, 620, 168, 660, 160, 700, 190, 760, 210, 790, 260, 810, 310, 830, 280, 850, 262, 890, 265, 920, 240, 960, 200, 1000, 182, 1040, 178, 1080, 184, 1120, 165, 1160, 145, 1200, 125]), real([600, 172, 612, 178, 622, 188]), z9([150, 0, 180, 60, 240, 215, 300, 250, 360, 225, 430, 165, 480, 130, 540, 115, 600, 120, 660, 100, 720, 70, 765, 62, 800, 68, 850, 105, 880, 150, 920, 190, 960, 210, 1020, 212, 1080, 200, 1150, 205, 1200, 205]), real([990, 260, 1003, 252, 1015, 256, 1030, 266, 1045, 272, 1055, 288, 1065, 320]), z10([340, 0, 380, 70, 430, 160, 470, 195, 500, 197, 540, 225, 570, 255, 610, 230, 650, 238, 700, 228, 760, 197, 830, 197, 860, 220, 890, 270, 915, 310])), '#f07030', 2);
  draw('lines-front', join(real([186, 514, 200, 505, 212, 490, 225, 475, 240, 450, 250, 430]), z8([225, 830, 250, 720, 270, 680, 300, 665, 330, 675, 390, 670, 420, 718, 500, 720, 600, 722, 640, 690, 700, 600, 730, 550, 775, 548, 815, 488, 840, 515, 880, 512, 940, 530, 1000, 495, 1040, 490, 1080, 473, 1130, 530, 1200, 620]), z9([60, 490, 110, 565, 165, 585, 210, 540, 260, 495, 310, 490, 430, 507, 480, 480, 540, 390, 600, 362, 650, 385, 700, 440, 720, 490, 755, 520, 850, 522, 960, 500, 1040, 505, 1080, 490, 1100, 462, 1140, 470, 1170, 500, 1200, 545]), z10([40, 85, 70, 130, 105, 200, 160, 310, 200, 350, 240, 410, 275, 465, 320, 470, 380, 470, 430, 432, 480, 425, 550, 420, 575, 450, 600, 490, 650, 510, 700, 550, 730, 600, 790, 700, 830, 800, 860, 870, 890, 910, 920, 905])), '#3a70dc', 2);

  // grids and axis ticks
  var months = [306.5, 446.5, 574.5, 701.5, 835.5, 969.5, 1109.5, 1230.5];
  function grid(id, y0, y1, levels) {
    var d = '';
    months.forEach(function (m) { d += 'M' + m + ' ' + y0 + 'V' + y1; });
    levels.forEach(function (l) { d += 'M184 ' + l + 'H1308'; });
    el(id, 'path', { d: d, stroke: '#e6e6e6', fill: 'none' });
  }
  grid('grid', 99, 684, [164.5, 236.5, 308.5, 380.5, 452.5, 525.5, 597.5, 669.5]);
  grid('vgrid', 685, 742, [714.5]);
  grid('mgrid', 743, 818, [764.5, 786.5, 808.5]);

  var pt = '', v;
  for (v = 0; v < 37; v++) {
    var y = Math.round(135.5 + v * 14.44) + 0.5;
    pt += 'M1309 ' + y + 'h' + (v % 5 === 2 ? 6 : 3);
  }
  document.getElementById('pticks').setAttribute('d', pt);
  document.getElementById('vticks').setAttribute('d', 'M1309 714.500h6M1309 736.500h6M1309 725.500h3M1309 703.500h3');
  document.getElementById('mticks').setAttribute('d', 'M1309 764.500h6M1309 786.500h6M1309 808.500h6M1309 775.500h3M1309 797.500h3');

  // volume
  var H = [13,10,11,11,10,12,11,12,11,12,10,12,12,10,10,10,12,12,12,15,16,38,31,26,21,12,11,14,12,11,10,12,12,14,13,12,13,11,13,12,11,10,12,24,21,13,18,23,14,14,13,12,14,12,10,12,10,13,12,13,28,14,13,11,13,10,10,12,11,10,12,11,10,11,10,11,12,10,12,11,11,9,12,10,13,10,11,12,9,11,10,12,10,11,13,14,6,13,12,10,11,12,13,14,10,11,10,12,11,10,12,10,11,13,12,13,10,11,13,12,10,12,11,10,13,11,12,13,12,12,8,12,13,8,12,8,7,10,11,12,7,5,6,8,11,8,7,9,8,12,9,11,19,9,16,15,11,9,11,15,15,11,12,16,33,17,13,15,17,17];
  H.forEach(function (h, i) {
    var col = i > 0 && h > H[i - 1] ? RED : BLUE;
    el('vbars', 'rect', { x: Math.round(xi(i)) - 2.5, y: 741 - h, width: 5.5, height: h, fill: col });
  });
  var vg = real([185, 723, 205, 727, 300, 729, 318, 728, 325, 718, 345, 714, 360, 722, 370, 726, 440, 729, 470, 723, 495, 722, 510, 725, 530, 728, 690, 728, 1150, 728, 1165, 723, 1185, 722, 1200, 728, 1230, 727, 1245, 723, 1265, 724]);
  el('vlines', 'path', { d: 'M185 725.500H320L345 725 460 724 1000 726H1268', fill: 'none', stroke: '#1c84c4' });
  draw('vlines', vg, '#4f9a25', 1);
  el('vlines', 'path', { d: 'M185 728H1268', fill: 'none', stroke: '#1010a8' });
  el('vlines', 'path', { d: 'M185 727.500H1268', fill: 'none', stroke: '#742044', 'stroke-width': 1.3 });

  // MACD
  var Z6 = function (a) { return map(a, 0, 680, 3, 3); };
  var Z12 = function (a) { return map(a, 184, 680, 2.8, 3); };
  var Z7 = function (a) { return map(a, 1000, 680, 3, 3); };
  var macd = join(Z6([560, 275, 620, 262, 690, 250, 740, 252, 790, 270, 850, 295, 890, 303, 930, 302, 980, 268, 1000, 268, 1060, 275, 1120, 285, 1190, 297, 1240, 297, 1300, 305, 1380, 296, 1440, 300]), Z12([780, 296, 870, 290, 950, 290, 1000, 305, 1030, 320, 1100, 345, 1200, 364, 1270, 362, 1300, 355, 1380, 332, 1440, 322, 1510, 310, 1568, 297]), real([800, 782, 840, 785, 900, 790, 950, 793]), Z7([0, 365, 60, 368, 200, 380, 250, 380, 320, 365, 390, 350, 430, 352, 490, 364, 520, 360, 590, 365, 650, 375, 740, 398, 760, 398, 795, 385]));
  var sig = join(Z6([560, 290, 600, 280, 700, 262, 760, 258, 850, 280, 920, 292, 980, 285, 1040, 275, 1130, 282, 1230, 290, 1320, 300, 1440, 300]), Z12([800, 297, 960, 292, 1080, 315, 1240, 355, 1300, 355, 1400, 338, 1568, 318]), real([800, 784, 840, 788, 900, 790, 950, 792]), Z7([0, 348, 130, 370, 200, 377, 280, 373, 390, 358, 530, 358, 640, 368, 720, 380, 795, 388]));
  function at(p, x) {
    for (var i = 0; i < p.length - 1; i++) {
      if (x <= p[i + 1][0]) {
        var t = Math.max(0, (x - p[i][0]) / (p[i + 1][0] - p[i][0]));
        return p[i][1] + (p[i + 1][1] - p[i][1]) * t;
      }
    }
    return p[p.length - 1][1];
  }
  for (v = 0; v < 170; v++) {
    var x = Math.round(xi(v));
    var k = x < 240 ? 2.3 : x < 560 ? 1.6 : 1;
    var o = (at(sig, x) - at(macd, x)) * k;
    if (Math.abs(o) < 0.5) o = 0.5;
    el('mbars', 'rect', { x: x - 2.5, y: o > 0 ? 786 - o : 786, width: 5.5, height: Math.abs(o), fill: o > 0 ? '#f4a0cc' : '#a8d0f8' });
  }
  el('mbars', 'path', { d: 'M1266 786.500H1307', stroke: '#f4a0cc' });
  draw('mlines', sig, '#3060c8', 1.2);
  draw('mlines', macd, '#e87020', 1.2);
})();
```
